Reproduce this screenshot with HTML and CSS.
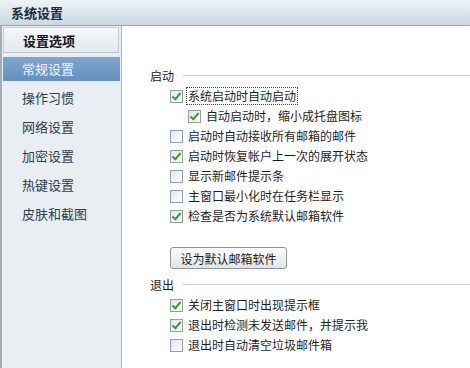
FILE: index.html
```html
<!DOCTYPE html>
<html lang="zh-CN">
<head>
    <meta charset="UTF-8">
    <title>系统设置</title>
    <link rel="stylesheet" href="styles.css">
</head>
<body>
    <div class="window">
        <div class="titlebar">系统设置</div>
        <div class="main">
            <div class="sidebar">
                <div class="side-head">设置选项</div>
                <div class="side-item active">常规设置</div>
                <div class="side-item">操作习惯</div>
                <div class="side-item">网络设置</div>
                <div class="side-item">加密设置</div>
                <div class="side-item">热键设置</div>
                <div class="side-item">皮肤和截图</div>
            </div>
            <div class="content">
                <div class="legend"><span>启动</span><i class="rule"></i></div>
                <div class="opt"><span class="box on"></span><span class="label focus">系统启动时自动启动</span></div>
                <div class="opt sub"><span class="box on"></span><span class="label">自动启动时，缩小成托盘图标</span></div>
                <div class="opt"><span class="box"></span><span class="label">启动时自动接收所有邮箱的邮件</span></div>
                <div class="opt"><span class="box on"></span><span class="label">启动时恢复帐户上一次的展开状态</span></div>
                <div class="opt"><span class="box"></span><span class="label">显示新邮件提示条</span></div>
                <div class="opt"><span class="box"></span><span class="label">主窗口最小化时在任务栏显示</span></div>
                <div class="opt"><span class="box on"></span><span class="label">检查是否为系统默认邮箱软件</span></div>
                <button class="btn">设为默认邮箱软件</button>
                <div class="legend exit"><span>退出</span><i class="rule"></i></div>
                <div class="opt"><span class="box on"></span><span class="label">关闭主窗口时出现提示框</span></div>
                <div class="opt"><span class="box on"></span><span class="label">退出时检测未发送邮件，并提示我</span></div>
                <div class="opt"><span class="box"></span><span class="label">退出时自动清空垃圾邮件箱</span></div>
            </div>
        </div>
    </div>
</body>
</html>
```
FILE: styles.css
```css
body {
    margin: 0;
    font-family: "Noto Sans CJK SC", "DejaVu Sans", sans-serif;
    font-size: 12px;
    color: #1e1e1e;
    background: #fff;
}
.window {
    width: 470px;
    height: 368px;
    overflow: hidden;
    display: flex;
    flex-direction: column;
}
.titlebar {
    height: 26px;
    line-height: 26px;
    padding-left: 11px;
    font-size: 13px;
    font-weight: bold;
    color: #1c2a38;
    background: linear-gradient(#edf2f7, #cbd7e3);
    border-bottom: 1px solid #98a6b3;
    box-sizing: border-box;
}
.main {
    flex: 1;
    display: flex;
}
.sidebar {
    width: 122px;
    box-sizing: border-box;
    background: #e8eef2;
    border-left: 2px solid #a2adb6;
    border-right: 1px solid #aab7c2;
    padding-top: 1px;
}
.side-head {
    margin: 0 2px 0 1px;
    height: 26px;
    line-height: 25px;
    box-sizing: border-box;
    padding-left: 19px;
    font-size: 13px;
    font-weight: bold;
    color: #151515;
    background: linear-gradient(#f5f7f9, #e4e9ee);
    border: 1px solid #c4ced7;
    border-bottom-color: #b9c6d2;
}
.side-item {
    height: 24px;
    line-height: 24px;
    margin: 0 1px 5px 1px;
    padding-left: 19px;
    font-size: 13px;
    color: #2c3d4f;
}
.side-item.active {
    margin-top: 4px;
    color: #f4f8fc;
    background: linear-gradient(#7fa5cf, #6590c0);
}
.content {
    flex: 1;
    padding: 39px 0 0 28px;
}
.legend {
    display: flex;
    align-items: center;
    height: 20px;
    gap: 9px;
    margin-bottom: 1px;
}
.rule {
    flex: 1;
    border-top: 1px solid #cbd3da;
}
.legend.exit {
    margin-top: 5px;
}
.opt {
    display: flex;
    align-items: center;
    height: 20px;
    padding-left: 20px;
}
.opt.sub {
    padding-left: 38px;
}
.box {
    width: 13px;
    height: 13px;
    box-sizing: border-box;
    border: 1px solid #8ea1b3;
    background: linear-gradient(135deg, #e2e6ea, #fff);
    margin-right: 5px;
    position: relative;
}
.box.on::after {
    content: "";
    position: absolute;
    left: 3px;
    top: 0px;
    width: 3px;
    height: 7px;
    border: solid #3f9a27;
    border-width: 0 2px 2px 0;
    transform: rotate(40deg);
}
.label {
    line-height: 16px;
    border: 1px dotted transparent;
    margin-left: -2px;
    padding: 0 1px;
}
.label.focus {
    border-color: #444;
}
.btn {
    display: block;
    margin: 21px 0 0 20px;
    width: 117px;
    height: 22px;
    padding: 0;
    font-family: inherit;
    font-size: 12px;
    color: #1e1e1e;
    background: linear-gradient(#fdfdfd, #e4e4e4);
    border: 1px solid #8c949c;
    border-radius: 3px;
}
```
